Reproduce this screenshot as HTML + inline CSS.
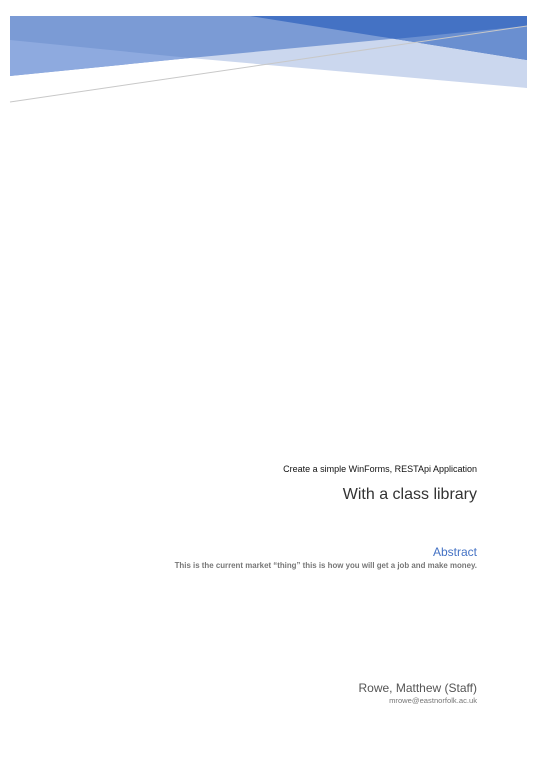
<!DOCTYPE html>
<html><head><style>
html,body{margin:0;padding:0;background:#fff;width:540px;height:762px;overflow:hidden;font-family:"Liberation Sans",sans-serif}
.t{position:absolute;right:63px;white-space:nowrap;text-align:right}
</style></head><body>
<svg width="540" height="110" style="position:absolute;left:0;top:0">
<polygon points="10,16 527,16 527,88 190,58" fill="#cbd7ee"/>
<polygon points="10,16 527,16 527,26 190,58 10,76" fill="#7b9bd5"/>
<polygon points="10,40 190,58 10,76" fill="#8eaadf"/>
<polygon points="250,16 527,16 527,60" fill="#4472c4"/>
<polygon points="395,39 527,26 527,60" fill="#6a8fd0"/>
<line x1="10" y1="102" x2="527" y2="26" stroke="#c8c8c8" stroke-width="1"/>
</svg>
<div class="t" style="top:464px;font-size:9px;color:#111">Create a simple WinForms, RESTApi Application</div>
<div class="t" style="top:486px;font-size:16px;color:#333">With a class library</div>
<div class="t" style="top:545px;font-size:12px;color:#4472c4">Abstract</div>
<div class="t" style="top:561px;font-size:7.9px;color:#777;font-weight:bold">This is the current market “thing” this is how you will get a job and make money.</div>
<div class="t" style="top:681px;font-size:12px;color:#555">Rowe, Matthew (Staff)</div>
<div class="t" style="top:696px;font-size:7.6px;color:#777">mrowe@eastnorfolk.ac.uk</div>
</body></html>
